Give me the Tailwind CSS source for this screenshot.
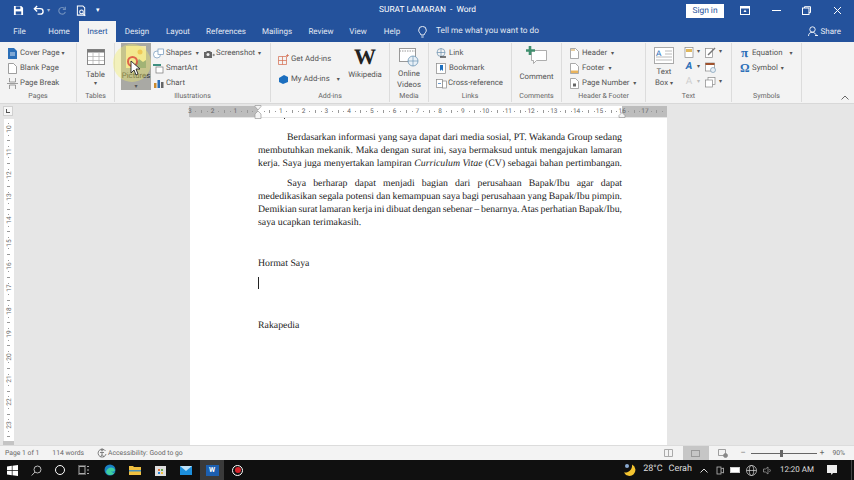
<!DOCTYPE html>
<html lang="en">
<head>
<meta charset="UTF-8">
<title>SURAT LAMARAN - Word</title>
<script src="https://cdn.jsdelivr.net/npm/@tailwindcss/browser@4"></script>
</head>
<body class="w-[854px] h-[480px] overflow-hidden bg-[#e6e6e6] font-['Roboto','Liberation_Sans',sans-serif] text-[#444] [text-rendering:geometricPrecision]">
<div class="relative flex flex-col h-[480px]">

  <!-- Title bar -->
  <div class="h-[21px] bg-[#24529c] flex items-center text-white relative">
    <div class="flex items-center pl-[13px]">
      <svg class="w-[11px] h-[11px]" viewBox="0 0 12 12"><path d="M1 1h8l2 2v8H1z" fill="#fff"/><rect x="3" y="1.500" width="5" height="3" fill="#24529c"/><rect x="3" y="7" width="6" height="3.500" fill="#24529c"/></svg>
      <svg class="w-[11px] h-[11px] ml-[9px]" viewBox="0 0 12 12" fill="none" stroke="#fff" stroke-width="1.500"><path d="M2 4h6a3 3 0 0 1 0 6H5"/><path d="M4.500 1 1.500 4l3 3"/></svg>
      <span class="text-[6px] text-[#a9bcd8] ml-[3px]">▾</span>
      <svg class="w-[10px] h-[10px] ml-[7px]" viewBox="0 0 12 12" fill="none" stroke="#6f8fbd" stroke-width="1.400"><path d="M10 7a4 4 0 1 1-1-4"/><path d="M10 1v3H7"/></svg>
      <svg class="w-[11px] h-[12px] ml-[9px]" viewBox="0 0 12 13" fill="none" stroke="#fff" stroke-width="1.100"><path d="M1.500 1h6l2 2v8h-8z"/><circle cx="6" cy="7.500" r="2"/><path d="M7.500 9l2.500 3"/></svg>
      <span class="text-[7px] ml-[9px]">▾</span>
    </div>
    <div class="absolute left-[379px] top-[4px] text-[8.400px] leading-[12px]">SURAT LAMARAN&nbsp; -&nbsp; Word</div>
    <div class="ml-auto flex items-center">
      <div class="w-[38px] h-[14px] bg-white text-[#24529c] text-[8.400px] leading-[14px] text-center mr-[16px]">Sign in</div>
      <svg class="w-[10px] h-[9px] mr-[22px]" viewBox="0 0 10 9"><rect x=".5" y=".5" width="9" height="8" fill="none" stroke="#fff"/><rect x=".5" y=".5" width="9" height="2" fill="#fff"/><path d="M5 3.500 3.500 6h3z" fill="#fff"/></svg>
      <div class="w-[9px] h-px bg-white mr-[21px]"></div>
      <svg class="w-[9px] h-[9px] mr-[22px]" viewBox="0 0 9 9" fill="none" stroke="#fff"><rect x=".5" y="2" width="6.500" height="6.500"/><path d="M2.500 2V.7h6v6H7"/></svg>
      <svg class="w-[9px] h-[9px] mr-[12px]" viewBox="0 0 9 9" stroke="#fff"><path d="M1 1l7 7M8 1 1 8"/></svg>
    </div>
  </div>

  <!-- Tabs -->
  <div class="h-[21px] bg-[#24529c] flex items-end text-[8px] leading-[21px] text-[#e3e9f3] text-center relative">
    <div class="h-[21px] w-[39px]">File</div>
    <div class="h-[21px] w-[40px]">Home</div>
    <div class="h-[21px] w-[37px] bg-[#f3f3f3] text-[#24529c]">Insert</div>
    <div class="h-[21px] w-[42px]">Design</div>
    <div class="h-[21px] w-[40px]">Layout</div>
    <div class="h-[21px] w-[56px]">References</div>
    <div class="h-[21px] w-[46px]">Mailings</div>
    <div class="h-[21px] w-[42px]">Review</div>
    <div class="h-[21px] w-[32px]">View</div>
    <div class="h-[21px] w-[36px]">Help</div>
    <div class="h-[21px] flex items-center gap-[9px] pl-[8px]">
      <svg class="w-[9px] h-[12px]" viewBox="0 0 9 12" fill="none" stroke="#fff" stroke-width=".9"><path d="M3 9C2.500 7 .7 6.500.7 4.200a3.800 3.800 0 0 1 7.600 0C8.300 6.500 6.500 7 6 9z"/><path d="M3.300 11h2.400"/></svg>
      <span class="text-[8.300px]">Tell me what you want to do</span>
    </div>
    <div class="absolute right-[13px] top-0 h-[21px] flex items-center gap-[3px]">
      <svg class="w-[10px] h-[11px]" viewBox="0 0 10 11" fill="none" stroke="#fff" stroke-width=".9"><circle cx="4.500" cy="3.500" r="2.700"/><path d="M.5 10c0-5 7-5 8 0"/><path d="M7 9.500h3"/></svg>
      <span>Share</span>
    </div>
  </div>

  <!-- Ribbon -->
  <div class="h-[61px] bg-[#f3f3f3] flex text-[7.800px] leading-[12px] text-[#555] whitespace-nowrap">
    <!-- Pages -->
    <div class="w-[77px] h-[59px] mt-[1px] border-r border-[#dcdcdc] flex flex-col relative">
      <div class="flex-1 flex flex-col gap-[3px] pl-[8px] pt-[4px]">
        <div class="h-[12px] flex items-center gap-[3px]"><svg class="w-[9px] h-[11px]" viewBox="0 0 9 11"><path d="M0 0h6l3 3v8H0z" fill="#2b6fb8"/><path d="M2 5h5M2 7h5" stroke="#fff" stroke-width=".8"/></svg><span>Cover Page <span class="text-[6px]">▾</span></span></div>
        <div class="h-[12px] flex items-center gap-[3px]"><svg class="w-[9px] h-[11px]" viewBox="0 0 9 11" fill="#fff" stroke="#777" stroke-width=".7"><path d="M.5.500h5l3 3v7h-8z"/></svg><span>Blank Page</span></div>
        <div class="h-[12px] flex items-center gap-[2px] -ml-[1px]"><svg class="w-[11px] h-[11px]" viewBox="0 0 11 11" fill="none" stroke="#777" stroke-width=".7"><path d="M2.500 0v4h6V0M2.500 11V7h6v4M0 5.500h11" /></svg><span>Page Break</span></div>
      </div>
      <div class="h-[12px] text-center text-[7px] text-[#666]">Pages</div>
    </div>
    <!-- Tables -->
    <div class="w-[38px] h-[59px] mt-[1px] border-r border-[#dcdcdc] flex flex-col items-center">
      <svg class="w-[18px] h-[16px] mt-[6px]" viewBox="0 0 18 16"><rect x=".5" y=".5" width="17" height="15" fill="#fff" stroke="#888"/><rect x=".5" y=".5" width="17" height="3" fill="#777"/><path d="M6 4v11M12 4v11M1 7.500h16M1 11.500h16" stroke="#aaa" stroke-width=".7"/></svg>
      <div class="mt-[4px] leading-[11px]">Table</div>
      <div class="text-[6px] leading-[8px]">▾</div>
      <div class="mt-auto h-[12px] text-[7px] text-[#666]">Tables</div>
    </div>
    <!-- Illustrations -->
    <div class="w-[156px] h-[59px] mt-[1px] border-r border-[#dcdcdc] flex flex-col">
      <div class="flex-1 flex">
        <div class="w-[30px] h-[47px] ml-[6px] bg-[#a9a9a4] flex flex-col items-center shrink-0">
          <svg class="w-[20px] h-[22px] mt-[3px]" viewBox="0 0 20 22"><rect width="20" height="22" fill="#f3e7ab"/><circle cx="14" cy="6" r="2.500" fill="#efb14c"/><path d="M6 22l7-9 4 3 3-2v8z" fill="#6c8d7e"/></svg>
          <div class="mt-[2px] text-[#333] leading-[11px]">Pictures</div>
          <div class="text-[6px] leading-[7px] mt-[2px]">▾</div>
        </div>
        <div class="w-[53px] shrink-0 flex flex-col gap-[3px] pl-[2px] pt-[4px]">
          <div class="h-[12px] flex items-center gap-[2px]"><svg class="w-[11px] h-[11px]" viewBox="0 0 11 11" fill="#fff" stroke="#6d93b8" stroke-width=".7"><circle cx="4" cy="6.500" r="3.500"/><rect x="5" y="1" width="5.500" height="5.500"/></svg><span>Shapes <span class="text-[6px] ml-[2px]">▾</span></span></div>
          <div class="h-[12px] flex items-center gap-[2px]"><svg class="w-[11px] h-[11px]" viewBox="0 0 11 11"><path d="M0 1h8v2H0z" fill="#3f8f80"/><rect x="3" y="4" width="7" height="6" fill="#fff" stroke="#777" stroke-width=".7"/></svg><span>SmartArt</span></div>
          <div class="h-[12px] flex items-center gap-[2px]"><svg class="w-[11px] h-[11px]" viewBox="0 0 11 11"><rect x="1" y="5" width="2.500" height="5" fill="#c98a2e"/><rect x="4.500" y="2" width="2.500" height="8" fill="#2b6fb8"/><rect x="8" y="4" width="2.500" height="6" fill="#666"/></svg><span>Chart</span></div>
        </div>
        <div class="pt-[4px] shrink-0">
          <div class="h-[12px] flex items-center gap-[1px]"><svg class="w-[11px] h-[9px]" viewBox="0 0 11 9"><path d="M0 3h2l1-1h3l1 1h1v6H0z" fill="#666"/><circle cx="4" cy="5.500" r="1.500" fill="#f3f3f3"/><path d="M8.500 6h2.500M9.700 4.800v2.400" stroke="#666" stroke-width=".7"/></svg><span>Screenshot <span class="text-[6px] ml-[1px]">▾</span></span></div>
        </div>
      </div>
      <div class="h-[12px] text-center text-[7px] text-[#666]">Illustrations</div>
    </div>
    <!-- Add-ins -->
    <div class="w-[119px] h-[59px] mt-[1px] border-r border-[#dcdcdc] flex flex-col">
      <div class="flex-1 flex">
        <div class="flex flex-col gap-[8px] pl-[7px] pt-[10px] w-[75px]">
          <div class="h-[12px] flex items-center gap-[2px]"><svg class="w-[11px] h-[11px]" viewBox="0 0 11 11" fill="none" stroke="#d2694a" stroke-width=".7"><path d="M.5 2.500h8v8h-8zM4.500 2.500v8M.5 6.500h8M9.500 0v3M8 1.500h3"/></svg><span>Get Add-ins</span></div>
          <div class="h-[12px] flex items-center gap-[2px]"><svg class="w-[11px] h-[11px]" viewBox="0 0 11 11"><path d="M1 4l5-3 4 2v5l-5 2-4-2z" fill="#1c6fbf"/></svg><span>My Add-ins <span class="text-[6px] ml-[5px]">▾</span></span></div>
        </div>
        <div class="flex flex-col items-center w-[38px]">
          <div class="font-['Liberation_Serif',serif] font-bold text-[22px] leading-[20px] mt-[4px] text-[#222]">W</div>
          <div class="mt-[2px] leading-[11px]">Wikipedia</div>
        </div>
      </div>
      <div class="h-[12px] text-center text-[7px] text-[#666]">Add-ins</div>
    </div>
    <!-- Media -->
    <div class="w-[39px] h-[59px] mt-[1px] border-r border-[#dcdcdc] flex flex-col items-center">
      <svg class="w-[20px] h-[19px] mt-[5px]" viewBox="0 0 20 19"><rect x=".5" y=".5" width="16" height="13" fill="#fff" stroke="#999"/><path d="M.5 3h16" stroke="#999" stroke-dasharray="1.500 1"/><circle cx="14" cy="13" r="5" fill="#e8f0f7" stroke="#5c89ad" stroke-width=".7"/><path d="M9 13h10M14 8v10" stroke="#5c89ad" stroke-width=".6"/></svg>
      <div class="mt-[1px] leading-[11px] text-center">Online<br>Videos</div>
      <div class="mt-auto h-[12px] text-[7px] text-[#666]">Media</div>
    </div>
    <!-- Links -->
    <div class="w-[83px] h-[59px] mt-[1px] border-r border-[#dcdcdc] flex flex-col">
      <div class="flex-1 flex flex-col gap-[3px] pl-[7px] pt-[4px]">
        <div class="h-[12px] flex items-center gap-[2px]"><svg class="w-[11px] h-[11px]" viewBox="0 0 11 11" fill="none" stroke="#6a8fae" stroke-width=".7"><circle cx="5" cy="4.500" r="4"/><path d="M1 4.500h8M5 .5v8"/><path d="M4 9h6" stroke="#444" stroke-width="1.400"/></svg><span>Link</span></div>
        <div class="h-[12px] flex items-center gap-[3px]"><svg class="w-[10px] h-[11px]" viewBox="0 0 10 11"><rect x=".5" y=".5" width="9" height="10" fill="#fff" stroke="#888" stroke-width=".7"/><path d="M4 2h3v6L5.500 6.500 4 8z" fill="#1c6fbf"/></svg><span>Bookmark</span></div>
        <div class="h-[12px] flex items-center gap-[1px]"><svg class="w-[11px] h-[11px]" viewBox="0 0 11 11" fill="#fff" stroke="#888" stroke-width=".7"><rect x=".5" y="1.500" width="6" height="8"/><rect x="6.500" y="3" width="4" height="7"/><path d="M2 5.500h3" stroke="#2b6fb8"/></svg><span>Cross-reference</span></div>
      </div>
      <div class="h-[12px] text-center text-[7px] text-[#666]">Links</div>
    </div>
    <!-- Comments -->
    <div class="w-[50px] h-[59px] mt-[1px] border-r border-[#dcdcdc] flex flex-col items-center">
      <svg class="w-[21px] h-[19px] mt-[3px]" viewBox="0 0 21 19"><path d="M5.500 4.500h15v10h-10l-3 3v-3h-2z" fill="#fff" stroke="#999" stroke-width=".8"/><path d="M4 0v9M0 4.500h9" stroke="#3f8f6e" stroke-width="2.600"/></svg>
      <div class="mt-[6px] leading-[11px]">Comment</div>
      <div class="mt-auto h-[12px] text-[7px] text-[#666]">Comments</div>
    </div>
    <!-- Header & Footer -->
    <div class="w-[84px] h-[59px] mt-[1px] border-r border-[#dcdcdc] flex flex-col">
      <div class="flex-1 flex flex-col gap-[3px] pl-[8px] pt-[4px]">
        <div class="h-[12px] flex items-center gap-[3px]"><svg class="w-[9px] h-[11px]" viewBox="0 0 9 11"><path d="M.5.500h5l3 3v7h-8z" fill="#fff" stroke="#888" stroke-width=".7"/><path d="M1 1h4v2H1z" fill="#e9cfa0"/></svg><span>Header <span class="text-[6px] ml-[2px]">▾</span></span></div>
        <div class="h-[12px] flex items-center gap-[3px]"><svg class="w-[9px] h-[11px]" viewBox="0 0 9 11"><path d="M.5.500h5l3 3v7h-8z" fill="#fff" stroke="#888" stroke-width=".7"/><path d="M1 7.500h7v2.500H1z" fill="#e9b35c"/></svg><span>Footer <span class="text-[6px] ml-[2px]">▾</span></span></div>
        <div class="h-[12px] flex items-center gap-[3px]"><svg class="w-[9px] h-[11px]" viewBox="0 0 9 11"><path d="M.5.500h5l3 3v7h-8z" fill="#fff" stroke="#888" stroke-width=".7"/><rect x="3" y="5.500" width="3" height="3" fill="#666"/></svg><span>Page Number <span class="text-[6px] ml-[2px]">▾</span></span></div>
      </div>
      <div class="h-[12px] text-center text-[7px] text-[#666]">Header &amp; Footer</div>
    </div>
    <!-- Text -->
    <div class="w-[86px] h-[59px] mt-[1px] border-r border-[#dcdcdc] flex flex-col">
      <div class="flex-1 flex">
        <div class="w-[36px] flex flex-col items-center">
          <svg class="w-[20px] h-[17px] mt-[4px]" viewBox="0 0 20 17"><rect x=".5" y=".5" width="19" height="16" fill="#fff" stroke="#aaa"/><path d="M11 4h7M11 7h7M2 10h16M2 13h16" stroke="#bbb"/><text x="2" y="8.500" font-size="8" font-family="Liberation Sans" fill="#2b6fb8">A</text></svg>
          <div class="mt-[2px] leading-[11px] text-center">Text<br>Box <span class="text-[6px]">▾</span></div>
        </div>
        <div class="flex flex-col gap-[3px] pt-[3px] pl-[2px]">
          <div class="flex items-center gap-[3px] h-[12px]"><svg class="w-[10px] h-[11px]" viewBox="0 0 10 11"><rect x="1" y=".5" width="8" height="10" fill="#fff" stroke="#888" stroke-width=".7"/><rect x="2" y="2" width="6" height="3" fill="#e0b85c"/></svg><span class="text-[6px]">▾</span><svg class="w-[11px] h-[11px] ml-[2px]" viewBox="0 0 11 11"><rect x=".5" y="1.500" width="7" height="9" fill="#fff" stroke="#888" stroke-width=".7"/><path d="M3 8l7-7" stroke="#777" stroke-width="1.400"/></svg><span class="text-[6px]">▾</span></div>
          <div class="flex items-center gap-[3px] h-[12px]"><span class="w-[10px] text-center italic font-bold text-[#2b6fb8] text-[10px]">A</span><span class="text-[6px]">▾</span><svg class="w-[11px] h-[11px] ml-[2px]" viewBox="0 0 11 11"><rect x=".5" y="1" width="9" height="8" fill="#fff" stroke="#888" stroke-width=".7"/><rect x=".5" y="1" width="9" height="2" fill="#a0522d"/><circle cx="8" cy="8" r="2.500" fill="#e6eef5" stroke="#6a8fae" stroke-width=".6"/></svg></div>
          <div class="flex items-center gap-[3px] h-[12px]"><span class="w-[10px] text-center text-[#cfcfcf] text-[10px]">A</span><span class="text-[6px] text-[#bbb]">▾</span><svg class="w-[11px] h-[11px] ml-[2px]" viewBox="0 0 11 11" fill="#fff" stroke="#888" stroke-width=".7"><rect x="3" y=".5" width="7" height="7"/><rect x=".5" y="3" width="7" height="7"/></svg><span class="text-[6px]">▾</span></div>
        </div>
      </div>
      <div class="h-[12px] text-center text-[7px] text-[#666]">Text</div>
    </div>
    <!-- Symbols -->
    <div class="w-[70px] h-[59px] mt-[1px] border-r border-[#dcdcdc] flex flex-col">
      <div class="flex-1 flex flex-col gap-[3px] pl-[8px] pt-[4px]">
        <div class="h-[12px] flex items-center gap-[3px]"><span class="w-[9px] text-center text-[#2b6fb8] font-['Liberation_Serif',serif] text-[13px] font-bold">π</span><span>Equation <span class="text-[6px] ml-[5px]">▾</span></span></div>
        <div class="h-[12px] flex items-center gap-[3px]"><span class="w-[9px] text-center text-[#2b6fb8] font-['Liberation_Serif',serif] text-[12px] font-bold">Ω</span><span>Symbol <span class="text-[6px] ml-[1px]">▾</span></span></div>
      </div>
      <div class="h-[12px] text-center text-[7px] text-[#666]">Symbols</div>
    </div>
    <div class="flex-1 flex items-end justify-end pr-[5px] pb-[1px]">
      <svg class="w-[8px] h-[5px] mb-[2px]" viewBox="0 0 8 5" fill="none" stroke="#666"><path d="M.5 4.500 4 1l3.500 3.500"/></svg>
    </div>
  </div>

  <!-- Horizontal ruler row -->
  <div class="h-[15px] bg-[#e6e6e6] border-t border-[#d8d8d8] flex items-center shrink-0">
    <div class="w-[10px] h-[10px] ml-[3px] bg-[#f7f7f7] border border-[#d0d0d0] flex items-center justify-center"><div class="w-[4px] h-[4px] border-l border-b border-[#555]"></div></div>
    <div id="hruler" class="relative ml-[176px] w-[478px] h-[11px] bg-white text-[6.500px] leading-[11px] text-[#666]">
      <div class="absolute left-0 top-0 w-[69px] h-[11px] bg-[#bdbdbd]"></div>
      <div class="absolute right-0 top-0 w-[45px] h-[11px] bg-[#bdbdbd]"></div>
      <svg class="absolute left-[65px] -top-[1px] w-[8px] h-[14px]" viewBox="0 0 8 14" fill="#f5f5f5" stroke="#999" stroke-width=".7"><path d="M1 .5h6v1L4 5 1 1.500zM4 6l3 3v4.500H1V9z"/></svg>
      <svg class="absolute left-[429px] top-[6px] w-[8px] h-[6px]" viewBox="0 0 8 6" fill="#f5f5f5" stroke="#999" stroke-width=".7"><path d="M4 .5l3 3v2H1v-2z"/></svg>
    </div>
  </div>

  <!-- Document area -->
  <div class="flex-1 flex min-h-0">
    <div class="w-[21px] flex flex-col items-start">
      <div id="vruler" class="relative ml-[4px] w-[10px] h-[322px] mt-[1px] bg-white text-[6.500px] text-[#666]"></div>
      <div class="ml-[3px] w-[11px] h-[4px] bg-[#c4c4c4]"></div>
    </div>
    <div class="w-[169px]"></div>
    <div class="w-[477px] h-[327px] bg-white pl-[68px] font-['Liberation_Serif',serif] text-[9.800px] leading-[13px] text-[#222] overflow-hidden">
      <div class="w-[364px]">
        <div class="h-[13px] relative"><span class="absolute left-[26px] top-0 w-[1px] h-[1px] bg-[#333]"></span></div>
        <p class="indent-[29px] [word-spacing:-1px] [text-align-last:justify]">Berdasarkan informasi yang saya dapat dari media sosial, PT. Wakanda Group sedang</p>
        <p class="[word-spacing:-1px] [text-align-last:justify]">membutuhkan mekanik. Maka dengan surat ini, saya bermaksud untuk mengajukan lamaran</p>
        <p class="[word-spacing:-1px] [text-align-last:justify]">kerja. Saya juga menyertakan lampiran <i>Curriculum Vitae</i> (CV) sebagai bahan pertimbangan.</p>
        <p class="indent-[29px] mt-[7px] [text-align-last:justify]">Saya berharap dapat menjadi bagian dari perusahaan Bapak/Ibu agar dapat</p>
        <p class="[word-spacing:-1px] [text-align-last:justify]">mededikasikan segala potensi dan kemampuan saya bagi perusahaan yang Bapak/Ibu pimpin.</p>
        <p class="[word-spacing:-1.200px] [text-align-last:justify]">Demikian surat lamaran kerja ini dibuat dengan sebenar – benarnya. Atas perhatian Bapak/Ibu,</p>
        <p>saya ucapkan terimakasih.</p>
        <p class="mt-[28px]">Hormat Saya</p>
        <div class="mt-[7px] w-px h-[12px] bg-[#222]"></div>
        <p class="mt-[30px]">Rakapedia</p>
      </div>
    </div>
    <div class="flex-1"></div>
  </div>

  <!-- Status bar -->
  <div class="h-[15px] bg-[#f3f3f3] border-t border-[#dcdcdc] flex items-center text-[6.800px] text-[#666] shrink-0">
    <span class="ml-[5px]">Page 1 of 1</span>
    <span class="ml-[13px]">114 words</span>
    <svg class="w-[10px] h-[10px] ml-[13px]" viewBox="0 0 10 10" fill="none" stroke="#666" stroke-width=".8"><path d="M8.500 3A4 4 0 1 0 9 6"/><circle cx="5" cy="2" r="1"/><path d="M3 4.500h4M5 4.500v2L3.500 9M5 6.500 7 9"/></svg>
    <span class="ml-[1px]">Accessibility: Good to go</span>
    <div class="ml-auto flex items-center">
      <svg class="w-[9px] h-[8px]" viewBox="0 0 9 8" fill="none" stroke="#aaa"><path d="M.5.500h8v7h-8zM4.500.5v7"/></svg>
      <div class="w-[26px] h-[15px] ml-[10px] bg-[#c6c6c6] flex items-center justify-center"><div class="w-[9px] h-[7px] border border-[#999]"></div></div>
      <svg class="w-[10px] h-[9px] ml-[9px]" viewBox="0 0 10 9" fill="none" stroke="#888" stroke-width=".8"><path d="M.5.500h7v6h-7z"/><circle cx="7.500" cy="6.500" r="2" fill="#888"/></svg>
      <span class="ml-[13px] text-[8px]">–</span>
      <div class="relative w-[66px] h-px bg-[#666] ml-[5px]"><div class="absolute left-[29px] -top-[3px] w-[3px] h-[7px] bg-[#666]"></div></div>
      <span class="ml-[3px] text-[8px]">+</span>
      <span class="ml-[8px] mr-[9px]">90%</span>
    </div>
  </div>

  <!-- Taskbar -->
  <div class="h-[20px] bg-[#101010] flex items-center text-white shrink-0">
    <svg class="w-[11px] h-[11px] ml-[7px]" viewBox="0 0 11 11" fill="#fff"><path d="M0 1.500 4.800.8v4.400H0zM5.500.7 11 0v5.200H5.500zM0 5.900h4.800v4.300L0 9.500zM5.500 5.900H11V11l-5.500-.8z"/></svg>
    <svg class="w-[11px] h-[11px] ml-[13px]" viewBox="0 0 11 11" fill="none" stroke="#bbb"><circle cx="6.500" cy="4.500" r="3.500"/><path d="M4 7 .7 10.500"/></svg>
    <div class="w-[10px] h-[10px] ml-[13px] rounded-full border-[1.500px] border-white"></div>
    <svg class="w-[12px] h-[10px] ml-[13px]" viewBox="0 0 12 10" fill="none" stroke="#aaa"><rect x="1" y="1.500" width="6" height="7"/><path d="M9 1.500h2M9 5h2M9 8.500h2M0 0h8M0 10h8"/></svg>
    <svg class="w-[12px] h-[12px] ml-[14px]" viewBox="0 0 12 12"><circle cx="6" cy="6" r="5.500" fill="#1a7fc4"/><path d="M2 8C3 3 9 2 11 6c0 2-3 2-4 1 2 3 5 2 4 1-1 3-7 5-9 0z" fill="#3fd0a0"/></svg>
    <svg class="w-[12px] h-[10px] ml-[13px]" viewBox="0 0 12 10"><path d="M0 1h4l1 1h7v8H0z" fill="#f0c040"/><rect x="0" y="5" width="12" height="1.500" fill="#4a90b8"/></svg>
    <svg class="w-[11px] h-[12px] ml-[14px]" viewBox="0 0 11 12"><rect y="2" width="11" height="10" fill="#ddd"/><rect x="3" y="5" width="2" height="2" fill="#e0703a"/><rect x="6" y="5" width="2" height="2" fill="#6aa84f"/><rect x="3" y="8" width="2" height="2" fill="#2b88d8"/><rect x="6" y="8" width="2" height="2" fill="#f0c040"/></svg>
    <svg class="w-[12px] h-[9px] ml-[14px]" viewBox="0 0 12 9"><rect width="12" height="9" fill="#1c8fdc"/><path d="M0 0l6 5 6-5" fill="#bfe3fa"/></svg>
    <div class="w-[24px] h-[20px] ml-[8px] bg-[#3a3a3a] flex items-center justify-center">
      <div class="w-[13px] h-[11px] bg-[#1c5fb0] text-[7px] font-bold leading-[11px] text-center">W</div>
    </div>
    <div class="w-[11px] h-[11px] ml-[8px] rounded-full border border-white flex items-center justify-center"><div class="w-[6px] h-[6px] rounded-full bg-[#d8232a]"></div></div>
    <div class="ml-auto flex items-center text-[9px] text-[#ddd]">
      <svg class="w-[14px] h-[14px]" viewBox="0 0 14 14"><path d="M9 1.500a6 6 0 1 1-8 8 7 7 0 0 0 8-8z" fill="#f4c430"/><circle cx="4" cy="3" r="2" fill="#8aa9d0"/></svg>
      <span class="ml-[6px]">28°C</span>
      <span class="ml-[6px]">Cerah</span>
      <svg class="w-[8px] h-[5px] ml-[8px]" viewBox="0 0 8 5" fill="none" stroke="#ddd"><path d="M.5 4.500 4 1l3.500 3.500"/></svg>
      <svg class="w-[8px] h-[9px] ml-[8px]" viewBox="0 0 8 9" fill="none" stroke="#bbb" stroke-width=".8"><rect x="1" y="1" width="4" height="7"/><path d="M5 3l2.500-1v5L5 6"/></svg>
      <div class="w-[10px] h-[6px] ml-[6px] bg-white border border-[#ccc]"></div>
      <svg class="w-[11px] h-[11px] ml-[6px]" viewBox="0 0 11 11" fill="none" stroke="#ddd" stroke-width=".7"><circle cx="5.500" cy="5.500" r="5"/><ellipse cx="5.500" cy="5.500" rx="2.200" ry="5"/><path d="M.5 5.500h10"/></svg>
      <svg class="w-[9px] h-[9px] ml-[6px]" viewBox="0 0 9 9" fill="none" stroke="#999" stroke-width=".8"><path d="M.5 3h2L5 1v7L2.500 6h-2zM6.500 3a2 2 0 0 1 0 3"/></svg>
      <span class="ml-[8px] text-[8px]">12:20 AM</span>
      <svg class="w-[10px] h-[10px] ml-[13px]" viewBox="0 0 10 10"><path d="M0 0h10v8H6L4.500 10 4 8H0z" fill="#eee"/></svg>
      <div class="w-px h-[20px] bg-[#444] ml-[14px] mr-[2px]"></div>
    </div>
  </div>

  <!-- Recording highlight and mouse cursor over the Pictures button -->
  <div class="absolute left-[113px] top-[44px] w-[38px] h-[38px] rounded-full bg-[#f2ee6a]/40"></div>
  <div class="absolute left-[127px] top-[56px] w-[11px] h-[11px] rounded-full border-2 border-[#d9443a]/80"></div>
  <svg class="absolute left-[130px] top-[60px] w-[11px] h-[16px]" viewBox="0 0 11 16"><path d="M1 1v12l3-3 2 5 2-1-2-5h4z" fill="#fff" stroke="#222" stroke-width=".9"/></svg>
</div>

<script>
  // ruler marks: 1cm = 22.76px, page text starts at 69px inside the ruler
  const cm = 22.76;
  const hr = document.getElementById('hruler');
  for (let n = -3; n <= 18; n++) {
    const x = 69 + n * cm;
    if (n !== 0 && n < 18) {
      const s = document.createElement('span');
      s.className = 'absolute top-0 -translate-x-1/2';
      s.style.left = x + 'px';
      s.textContent = Math.abs(n);
      hr.appendChild(s);
    }
    [0.25, 0.5, 0.75].forEach(f => {
      const px = x + f * cm;
      if (px < 2 || px > 476) return;
      const t = document.createElement('span');
      t.className = f === 0.5 ? 'absolute top-[4px] w-px h-[3px] bg-[#999]' : 'absolute top-[5px] w-px h-px bg-[#999]';
      t.style.left = px + 'px';
      hr.appendChild(t);
    });
  }
  const vr = document.getElementById('vruler');
  for (let n = 9; n <= 23; n++) {
    const y = 10 + (n - 10) * cm;
    if (n >= 10) {
      const s = document.createElement('span');
      s.className = 'absolute left-1/2 -translate-x-1/2 -translate-y-1/2 -rotate-90 leading-none';
      s.style.top = y + 'px';
      s.textContent = n;
      vr.appendChild(s);
    }
    [0.25, 0.5, 0.75].forEach(f => {
      const py = y + f * cm;
      if (py < 2 || py > 320) return;
      const t = document.createElement('span');
      t.className = f === 0.5 ? 'absolute left-[3px] h-px w-[3px] bg-[#999]' : 'absolute left-[4px] h-px w-px bg-[#999]';
      t.style.top = py + 'px';
      vr.appendChild(t);
    });
  }
</script>
</body>
</html>
